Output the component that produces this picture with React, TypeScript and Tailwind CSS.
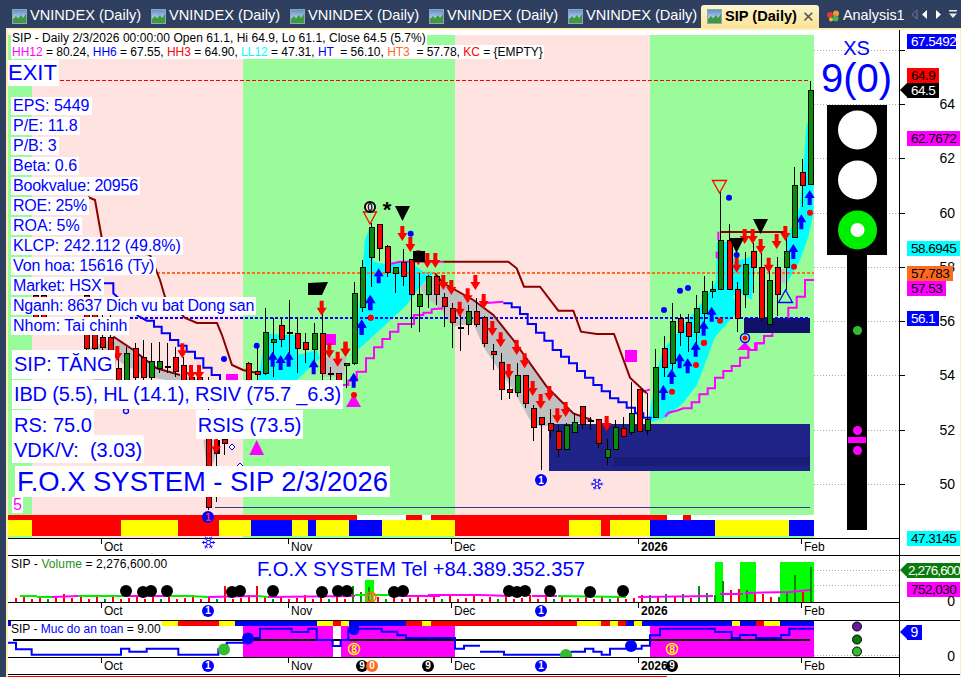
import { Snowflake } from "lucide-react";

type Row = number[];

// chart data is read off the screenshot crops: (ox, oy) is the crop origin, coordinates are 3x
const pts = (ox: number, oy: number, list: Row[]) =>
  list.map(([x, y]) => `${ox + x / 3},${oy + y / 3}`).join(" ");
const conv = (ox: number, oy: number, list: Row[]) =>
  list.map(([x, y]) => [ox + x / 3, oy + y / 3]);
const candles = (ox: number, oy: number, list: Row[]) =>
  list.map(([x, wt, bt, bb, wb, c]) => ({
    x: Math.round(ox + x / 3),
    wt: Math.round(oy + wt / 3),
    bt: Math.round(oy + bt / 3),
    bb: Math.round(oy + bb / 3),
    wb: Math.round(oy + wb / 3),
    c,
  }));

const allCandles = [
  ...candles(0, 280, [
    [106, 30, 45, 110, 130, 0],
    [130, 30, 45, 110, 130, 0],
    [258, 40, 45, 205, 230, 0],
    [282, 60, 100, 205, 240, 0],
    [306, 100, 170, 200, 240, 0],
    [330, 100, 170, 210, 250, 0],
    [354, 200, 265, 310, 330, 0],
    [378, 200, 218, 310, 340, 1],
    [404, 190, 203, 290, 300, 0],
    [428, 180, 232, 290, 310, 0],
    [452, 190, 242, 290, 300, 1],
    [476, 187, 242, 265, 280, 1],
    [500, 190, 258, 262, 280, 2],
    [524, 200, 232, 274, 290, 0],
    [548, 230, 256, 300, 320, 0],
    [572, 270, 290, 330, 340, 0],
    [596, 270, 290, 340, 350, 0],
    [624, 290, 470, 682, 690, 0],
    [648, 470, 480, 520, 665, 2],
    [672, 475, 478, 490, 525, 0],
    [744, 245, 250, 300, 330, 0],
    [770, 200, 274, 282, 320, 0],
    [795, 85, 155, 280, 285, 1],
    [819, 115, 178, 185, 290, 1],
    [843, 115, 135, 178, 200, 0],
    [867, 60, 155, 160, 250, 0],
    [891, 110, 160, 203, 280, 0],
    [915, 160, 185, 208, 250, 0],
    [941, 130, 160, 208, 280, 1],
    [965, 100, 160, 280, 300, 0],
    [989, 260, 278, 280, 300, 2],
    [1013, 280, 280, 300, 330, 0],
  ]),
  ...candles(340, 190, [
    [17, 520, 520, 526, 595, 1],
    [41, 275, 310, 520, 525, 1],
    [65, 210, 232, 352, 365, 1],
    [92, 100, 112, 200, 292, 1],
    [117, 103, 103, 175, 212, 0],
    [141, 165, 167, 247, 262, 0],
    [165, 232, 232, 248, 310, 1],
    [189, 178, 215, 257, 287, 0],
    [213, 208, 208, 313, 415, 0],
    [237, 250, 313, 347, 425, 1],
    [263, 255, 257, 313, 355, 1],
    [287, 255, 257, 313, 345, 0],
    [311, 310, 322, 347, 410, 0],
    [335, 340, 355, 395, 473, 0],
    [359, 375, 410, 412, 482, 2],
    [383, 345, 362, 403, 435, 1],
    [407, 325, 362, 403, 410, 0],
    [431, 378, 380, 460, 472, 0],
    [458, 462, 484, 493, 540, 0],
    [483, 490, 517, 598, 630, 0],
    [507, 560, 598, 607, 628, 0],
    [531, 520, 556, 607, 622, 1],
    [555, 555, 556, 640, 655, 0],
    [579, 645, 655, 712, 752, 0],
    [603, 680, 680, 703, 840, 0],
    [629, 657, 698, 721, 745, 0],
    [654, 705, 722, 778, 800, 0],
    [678, 700, 704, 778, 780, 1],
    [702, 668, 697, 727, 730, 1],
    [726, 647, 647, 703, 718, 0],
    [750, 680, 690, 692, 720, 2],
    [774, 688, 688, 760, 775, 0],
    [800, 748, 778, 802, 825, 1],
    [824, 690, 712, 778, 780, 1],
    [848, 682, 713, 737, 738, 0],
    [873, 577, 670, 727, 735, 1],
    [897, 598, 598, 722, 722, 0],
    [921, 608, 688, 721, 735, 1],
    [945, 478, 532, 680, 680, 1],
  ]),
  ...candles(640, 80, [
    [72, 768, 805, 861, 891, 0],
    [95, 670, 723, 849, 870, 1],
    [120, 703, 715, 757, 798, 0],
    [143, 703, 725, 767, 815, 0],
    [168, 645, 685, 757, 815, 1],
    [192, 588, 634, 700, 750, 1],
    [215, 603, 628, 634, 655, 1],
    [240, 335, 481, 628, 630, 1],
    [266, 433, 481, 628, 630, 0],
    [290, 605, 628, 715, 755, 0],
    [315, 517, 553, 643, 683, 1],
    [339, 490, 514, 562, 640, 0],
    [363, 520, 562, 715, 722, 0],
    [387, 560, 601, 733, 735, 1],
    [411, 530, 562, 643, 707, 0],
    [437, 460, 514, 562, 630, 1],
    [461, 262, 316, 472, 472, 1],
    [486, 237, 277, 316, 380, 0],
    [510, 3, 31, 311, 311, 1],
  ]),
];

const redArrows = [
  ...conv(340, 190, [[16, 455], [187, 108], [211, 141], [235, 181], [262, 189], [286, 189], [310, 255], [334, 270], [383, 295], [406, 255], [431, 312], [359, 335], [457, 393], [482, 427], [530, 450], [554, 490], [506, 522], [578, 573], [628, 588], [602, 612], [652, 655], [677, 636], [800, 678]]),
  ...conv(0, 280, [[352, 198], [547, 190], [573, 255], [597, 255], [965, 62], [988, 190], [1013, 215], [1037, 185], [648, 478]]),
  ...conv(640, 80, [[290, 533], [314, 447], [338, 447], [362, 477], [386, 533], [410, 462], [436, 438]]),
];
const blueArrows = [
  ...conv(340, 190, [[41, 548], [65, 388], [92, 316], [116, 235]]),
  ...conv(0, 280, [[818, 215], [842, 225], [866, 215], [941, 238], [1085, 120], [1110, 45]]),
  ...conv(640, 80, [[191, 722], [215, 680], [460, 492], [484, 403], [509, 330]]),
  ...conv(640, 340, [[70, 135], [95, 87], [119, 40], [143, 55], [167, 5]]),
];
const blueDots = [
  ...conv(340, 190, [[212, 131]]),
  ...conv(0, 280, [[770, 197], [672, 237]]),
  ...conv(640, 80, [[72, 690], [120, 632], [144, 624], [267, 353], [290, 525]]),
];
const redDots = [
  ...conv(340, 190, [[92, 383]]),
  ...conv(0, 280, [[1112, 113], [1062, 345]]),
  ...conv(640, 80, [[240, 722], [192, 789], [462, 560], [510, 398]]),
  ...conv(640, 340, [[96, 155], [168, 75], [192, 8]]),
];

const arrowDown = (x: number, y: number) => `M${x - 2} ${y}h4v7h3l-5 8l-5-8h3z`;
const arrowUp = (x: number, y: number) => `M${x - 2} ${y + 15}h4v-7h3l-5-8l-5 8h3z`;

const bands = [
  [8, 32, "#99fb99"],
  [32, 243, "#ffe3e0"],
  [243, 455, "#99fb99"],
  [455, 650, "#ffe3e0"],
  [650, 814, "#99fb99"],
] as const;

const stripTop = [[8, 357], [406, 422], [431, 667], [683, 691]];
const stripMain = [
  [8, 32, "#ffff00"], [32, 121, "#ff0000"], [121, 178, "#ffff00"], [178, 219, "#ff0000"],
  [219, 251, "#ffff00"], [251, 292, "#0000ff"], [292, 308, "#ffff00"], [308, 316, "#0000ff"],
  [316, 349, "#ffff00"], [349, 382, "#0000ff"], [382, 455, "#ffff00"], [455, 569, "#ff0000"],
  [569, 601, "#ffff00"], [601, 610, "#ff0000"], [610, 650, "#ffff00"], [650, 715, "#0000ff"],
  [715, 789, "#ffff00"], [789, 814, "#0000ff"],
] as const;
const stripSafety = [
  [161, 178, "#ffff00"], [178, 219, "#ff0000"], [219, 235, "#ffff00"], [235, 317, "#0000ff"],
  [317, 333, "#ffff00"], [333, 341, "#ff0000"], [341, 349, "#ffff00"], [349, 406, "#0000ff"],
  [406, 422, "#ff0000"], [422, 431, "#ffff00"], [431, 577, "#ff0000"], [577, 601, "#ffff00"],
  [601, 610, "#ff0000"], [610, 618, "#ffff00"], [618, 626, "#ff0000"], [626, 634, "#0000ff"],
  [634, 642, "#ffff00"], [642, 732, "#0000ff"], [732, 740, "#ffff00"], [740, 756, "#0000ff"],
  [756, 764, "#ff0000"], [764, 780, "#ffff00"], [780, 814, "#0000ff"],
] as const;

const priceTicks = [50, 104, 158, 213, 267, 321, 375, 430, 484];

function MainChart() {
  return (
    <svg className="block h-[508px] w-[891px]" viewBox="8 30 891 508">
      {bands.map(([a, b, c]) => (
        <rect key={a} x={a} y={35} width={b - a} height={503} fill={c} />
      ))}
      {priceTicks.map((y) => (
        <line key={y} x1={814} x2={899} y1={y + 0.5} y2={y + 0.5} stroke="#aaaaaa" strokeDasharray="1 2" />
      ))}
      <rect x={8} y={515} width={806} height={21} fill="#ffffff" />
      {stripTop.map(([a, b]) => (
        <rect key={a} x={a} y={515} width={b - a} height={5} fill="#ff0000" />
      ))}
      {stripMain.map(([a, b, c]) => (
        <rect key={a} x={a} y={520} width={b - a} height={16} fill={c} />
      ))}

      {/* clouds */}
      <g fill="#00ffff">
        <polygon points={pts(0, 280, [[775, 300], [790, 200], [800, 160], [850, 165], [885, 165], [895, 225], [950, 210], [960, 235], [890, 300]])} />
        <polygon points={pts(340, 190, [[30, 500], [45, 470], [60, 320], [75, 150], [88, 115], [100, 215], [150, 225], [185, 215], [215, 220], [250, 245], [285, 245], [240, 290], [200, 345], [130, 410], [70, 465], [40, 490]])} />
        <polygon points="648,423 655,380 663,350 680,330 700,305 716,282 717,242 727,242 735,262 755,255 752,300 740,293 733,296 740,310 730,320 715,337 697,385 683,403 667,417" />
        <polygon points={pts(640, 80, [[440, 610], [438, 490], [462, 420], [480, 380], [495, 200], [500, 130], [520, 130], [520, 400], [505, 470], [480, 540]])} />
      </g>
      <g fill="#c0c0c0">
        <polygon points={pts(340, 190, [[240, 290], [290, 250], [310, 280], [400, 330], [460, 375], [520, 450], [620, 590], [700, 670], [755, 695], [600, 710], [570, 690], [520, 600], [470, 530], [430, 470], [400, 400], [340, 410], [310, 370], [250, 310]])} />
        <polygon points={pts(0, 280, [[255, 210], [340, 175], [400, 210], [470, 265], [560, 290], [600, 300], [500, 300], [440, 290], [350, 240], [340, 300], [280, 300]])} />
        <polygon points={pts(0, 280, [[970, 230], [1040, 230], [1030, 290], [970, 290]])} />
        <polygon points={pts(0, 280, [[610, 480], [660, 480], [640, 550], [620, 560]])} />
        <polygon points={pts(640, 80, [[420, 570], [436, 565], [436, 610], [420, 610]])} />
      </g>

      <rect x={549} y={424} width={261} height={47} fill="#1f2388" />
      <rect x={614} y={457} width={196} height={9} fill="#1a1d75" />
      <rect x={744} y={318} width={66} height={15} fill="#11116a" />
      <line x1={215} x2={810} y1={507.5} y2={507.5} stroke="#333a8c" />

      <line x1={60} x2={810} y1={80.5} y2={80.5} stroke="#ff0000" strokeDasharray="4 2" />
      <line x1={12} x2={814} y1={273} y2={273} stroke="#ff6a1f" strokeWidth={2} strokeDasharray="3 2" />
      <line x1={125} x2={810} y1={318} y2={318} stroke="#0000ff" strokeWidth={2} strokeDasharray="3 2" />

      {/* step and average lines */}
      <g fill="none" strokeWidth={2}>
        <polyline stroke="#ff00ff" points={pts(340, 190, [[5, 585], [25, 585], [25, 572], [50, 572], [50, 545], [78, 545], [78, 505], [102, 505], [102, 472], [127, 472], [127, 447], [150, 447], [150, 425], [175, 425], [175, 402], [222, 402], [222, 375], [250, 375], [250, 368], [275, 368], [275, 358], [310, 355]])} />
        <polyline stroke="#ff00ff" points={pts(340, 190, [[150, 222], [180, 215], [310, 215]])} />
        <polyline stroke="#ff00ff" points={pts(340, 190, [[430, 340], [490, 335]])} />
        <polyline stroke="#0000ff" points={pts(340, 190, [[490, 340], [515, 340], [515, 352], [540, 352], [540, 372], [563, 372], [563, 402], [588, 402], [588, 428], [613, 428], [613, 452], [638, 452], [638, 480], [663, 480], [663, 500], [687, 500], [687, 520], [711, 520], [711, 543], [735, 543], [735, 563], [760, 563], [760, 585], [785, 585], [785, 604], [810, 604], [810, 625], [835, 625], [835, 637], [860, 637], [860, 653], [885, 653], [885, 670], [910, 670], [910, 683], [935, 683]])} />
        <polyline stroke="#0000ff" points={pts(0, 280, [[310, 10], [340, 10], [340, 40], [415, 108], [440, 122], [462, 122], [462, 140], [485, 140], [485, 160], [510, 160], [510, 180], [535, 180], [535, 197], [560, 197], [560, 215], [585, 215], [585, 235], [610, 235], [610, 263], [635, 263], [635, 285], [660, 285], [660, 300]])} />
        <polyline stroke="#ff00ff" points={pts(640, 340, [[75, 230], [85, 218], [110, 212], [130, 205], [155, 205], [155, 187], [178, 187], [178, 163], [203, 163], [203, 145], [225, 145], [225, 113], [250, 113], [250, 93], [275, 93], [275, 78], [300, 78], [300, 53], [325, 53], [325, 30], [350, 30], [350, 10], [372, 10]])} />
        <polyline stroke="#ff00ff" points={pts(640, 80, [[345, 810], [345, 790], [372, 790], [372, 768], [397, 768], [397, 760]])} />
        <polyline stroke="#ff00ff" points={pts(640, 80, [[445, 715], [445, 683], [470, 683], [470, 650], [495, 650], [495, 600], [522, 600]])} />
        <polyline stroke="#ff00ff" points={pts(640, 80, [[235, 480], [235, 455]])} />
        <polyline stroke="#ff00ff" points={pts(640, 80, [[230, 535], [230, 515]])} />
        <polyline stroke="#ff00ff" points={pts(640, 340, [[10, 155], [30, 148]])} />
        <polyline stroke="#8b0000" points="88,197 95,200 103,245 125,248 150,255 160,280 165,297 185,318 197,323 217,323 222,335 232,365 243,370 257,373" />
        <polyline stroke="#8b0000" points={pts(0, 280, [[340, 170], [400, 210], [470, 265], [540, 285]])} />
        <polyline stroke="#8b0000" points={pts(340, 190, [[310, 215], [505, 215], [530, 235], [552, 290], [600, 290], [655, 362], [700, 362], [723, 425], [770, 432], [822, 432], [870, 563], [920, 610]])} />
        <polyline stroke="#8b0000" points={pts(340, 190, [[285, 250], [310, 280], [400, 330], [460, 375], [520, 450], [620, 590], [700, 670], [755, 690]])} />
        <polyline stroke="#8b0000" points="720,232 787,232" />
        <polyline stroke="#8b0000" points={pts(640, 340, [[0, 150], [15, 155]])} />
      </g>

      <g fill="#ff00ff">
        <rect x={625} y={350} width={12} height={12} />
        <rect x={226} y={374} width={12} height={6} />
        <rect x={325} y={334} width={11} height={11} />
        <polygon points="346,407 361,407 353.7,394" />
        <polygon points="249.3,455 264,455 256.7,440" />
        <polygon points="737,350 752,350 745,342" />
      </g>

      {/* candles */}
      <g shapeRendering="crispEdges">
        {allCandles.map((k) => (
          <g key={k.x}>
            <line x1={k.x + 0.5} x2={k.x + 0.5} y1={k.wt} y2={k.wb} stroke="#000" />
            <rect
              x={k.x - 2}
              y={k.bt + 0.5}
              width={5}
              height={Math.max(k.bb - k.bt, 1)}
              fill={k.c === 0 ? "#ff0000" : k.c === 1 ? "#0a8a0a" : "#000"}
              stroke="#000"
            />
          </g>
        ))}
      </g>

      {redArrows.map(([x, y]) => (
        <path key={`${x}-${y}`} d={arrowDown(x, y)} fill="#ff0000" />
      ))}
      {blueArrows.map(([x, y]) => (
        <path key={`${x}-${y}`} d={arrowUp(x, y)} fill="#0000ff" />
      ))}
      {blueDots.map(([x, y]) => (
        <circle key={`${x}-${y}`} cx={x} cy={y} r={3} fill="#0000ff" />
      ))}
      {redDots.map(([x, y]) => (
        <circle key={`${x}-${y}`} cx={x} cy={y} r={3} fill="#ff0000" />
      ))}

      <g fill="#000">
        <polygon points="395,206 410,206 402.5,221" />
        <polygon points="753,219 768,219 760.5,234" />
        <polygon points="729,238 744,238 736.5,253" />
        <polygon points="308,283 328,282 322,295 308,295" />
        <rect x={413} y={251} width={12} height={11} />
      </g>
      <g fill="none" strokeWidth={1.3}>
        <polygon points="712.5,180.5 726.5,180.5 719.5,193" stroke="#ff0000" />
        <polygon points="363.5,212 376.5,212 370,224" stroke="#ff0000" />
        <polygon points="778.5,302.5 792.5,302.5 785.5,290" stroke="#0000ff" />
        <circle cx={745} cy={338} r={4.5} stroke="#0000ff" strokeWidth={1.5} />
        <circle cx={126} cy={411} r={2.5} stroke="#0000ff" />
      </g>
      <circle cx={745} cy={338} r={2.5} fill="#ff0000" />
      <polygon points="232,444 235,447 232,450 229,447" fill="#fff" stroke="#0000ff" />
      <polygon points="240,463 243,466 240,469 237,466" fill="#fff" stroke="#0000ff" />

      <circle cx={370} cy={207} r={5} fill="#fff" stroke="#000" strokeWidth={2} />
      <text x={370} y={211} textAnchor="middle" fontSize={10} fontWeight={700} fill="#000">0</text>
      <text x={387} y={217} textAnchor="middle" fontSize={22} fontWeight={700} fill="#000">*</text>
      <circle cx={541} cy={480} r={6} fill="#0000ff" />
      <text x={541} y={484} textAnchor="middle" fontSize={10} fontWeight={700} fill="#fff">1</text>
      <circle cx={208} cy={517} r={6} fill="#0000ff" />
      <text x={208} y={521} textAnchor="middle" fontSize={10} fontWeight={700} fill="#ff3030">1</text>

      {/* traffic light */}
      <rect x={827} y={105} width={60} height={150} fill="#000" />
      <rect x={847} y={255} width={20} height={275} fill="#000" />
      <circle cx={857.5} cy={130} r={19.5} fill="#fff" />
      <circle cx={857.5} cy={180} r={19.5} fill="#fff" />
      <circle cx={857.5} cy={230} r={19.5} fill="#00ee00" />
      <circle cx={857.5} cy={230} r={7} fill="#fff" />
      <circle cx={857.5} cy={330.5} r={4.5} fill="#33bb33" />
      <circle cx={857.5} cy={430.5} r={4.5} fill="#ff00ff" />
      <circle cx={857.5} cy={450.5} r={4.5} fill="#ff00ff" />
      <rect x={848} y={437} width={18} height={6} fill="#ff00ff" />
    </svg>
  );
}

const volumeOverrides: Record<number, number> = {
  26: -16, 30: -16, 42: 16, 43: 10, 44: 15, 85: 16, 86: 9, 87: 7, 88: 21, 89: -12, 90: -13,
  91: 12, 92: -8, 93: -8, 95: 5, 96: 10, 97: 27, 98: -10, 99: 35, 6: -8, 79: 7, 81: 8, 83: 8,
};
const volumePattern = [-4, -7, -3, -5, 3, -6, -3];
const volumes = Array.from({ length: 100 }, (_, i) => volumeOverrides[i] ?? volumePattern[i % 7]);

const volumeDots = [126, 143, 151, 167, 232, 240, 273, 322, 338, 347, 394, 403, 509, 517, 525, 550, 590, 623];

function VolumeChart() {
  return (
    <svg className="block h-[46px] w-[891px]" viewBox="8 556 891 46">
      <g fill="#00ff00">
        <rect x={365} y={580} width={9} height={22} />
        <rect x={715} y={562} width={8} height={40} />
        <rect x={740} y={562} width={16} height={40} />
        <rect x={780} y={562} width={34} height={40} />
      </g>
      <line x1={814} x2={899} y1={570.5} y2={570.5} stroke="#aaaaaa" strokeDasharray="1 2" />
      <line x1={814} x2={899} y1={585.5} y2={585.5} stroke="#aaaaaa" strokeDasharray="1 2" />
      <g shapeRendering="crispEdges">
        {volumes.map((v, i) => (
          <rect
            key={i}
            x={Math.round(15.3 + 8.027 * i)}
            y={602 - Math.abs(v)}
            width={1.5}
            height={Math.abs(v)}
            fill={v < 0 ? "#ff0000" : "#0a8a0a"}
          />
        ))}
      </g>
      <g fill="none" strokeWidth={2}>
        <polyline stroke="#00ee00" points="20,596 37,596" />
        <polyline stroke="#00ee00" points="37,597 52,597" />
        <polyline stroke="#ff00ff" points="52,597 78,596" />
        <polyline stroke="#00ee00" points="78,596 125,596" />
        <polyline stroke="#ff00ff" points="125,596 166,596" />
        <polyline stroke="#00ee00" points="166,596 190,596 208,597" />
        <polyline stroke="#ff00ff" points="208,597 258,596" />
        <polyline stroke="#00ee00" points="258,596 268,597" />
        <polyline stroke="#ff00ff" points="268,597 355,596" />
        <polyline stroke="#00ee00" points="355,595 390,595" />
        <polyline stroke="#ff00ff" points="390,596 440,596" />
        <polyline stroke="#ff00ff" points="428,595 480,595 510,596" />
        <polyline stroke="#ff00ff" points="532,596 557,596" />
        <polyline stroke="#00ee00" points="558,596 626,597" />
        <polyline stroke="#ff00ff" points="638,597 713,596" />
        <polyline stroke="#ff00ff" points="720,594 743,594" />
        <polyline stroke="#ff00ff" points="745,593 790,592 810,590" />
      </g>
      {volumeDots.map((x, i) => (
        <circle key={x} cx={x} cy={i % 3 === 1 ? 592 : 591} r={6} fill="#000" />
      ))}
      <circle cx={371} cy={597} r={5} fill="none" stroke="#ff6a1f" strokeWidth={1.5} />
      <text x={371} y={601} textAnchor="middle" fontSize={10} fontWeight={700} fill="#ff6a1f">0</text>
    </svg>
  );
}

function SafetyChart() {
  return (
    <svg className="block h-[36px] w-[891px]" viewBox="8 621 891 36">
      <rect x={8} y={621} width={3} height={5} fill="#0000ff" />
      {stripSafety.map(([a, b, c]) => (
        <rect key={a} x={a} y={621} width={b - a} height={5} fill={c} />
      ))}
      <g fill="#ff00ff">
        <rect x={243} y={626} width={90} height={31} />
        <rect x={341} y={626} width={114} height={31} />
        <rect x={650} y={626} width={164} height={31} />
      </g>
      <line x1={814} x2={899} y1={655.5} y2={655.5} stroke="#aaaaaa" strokeDasharray="1 2" />
      <line x1={13} x2={810} y1={640} y2={640} stroke="#000" strokeWidth={2} />
      <g fill="none" stroke="#0000ff" strokeWidth={2}>
        <polyline points={pts(0, 510, [[23, 398], [48, 398], [48, 418], [95, 418], [95, 434], [363, 434], [363, 416], [388, 416], [388, 425], [440, 425], [440, 416], [535, 416], [535, 434], [655, 434], [655, 418], [680, 418], [680, 398], [740, 398], [760, 384], [780, 384], [780, 356], [875, 356], [875, 366], [925, 366], [925, 356], [950, 356], [950, 390], [998, 390], [998, 408], [1022, 408], [1022, 390], [1045, 390], [1045, 356], [1145, 356], [1145, 365], [1192, 365], [1192, 376], [1218, 376], [1218, 384], [1365, 384], [1365, 416], [1392, 416], [1392, 407], [1440, 407]])} />
        <polyline points={pts(480, 510, [[0, 425], [72, 425], [72, 434], [240, 434], [275, 425], [315, 425], [315, 416], [340, 416], [340, 425], [365, 425], [365, 434], [390, 434], [390, 416], [438, 416], [485, 416], [485, 407], [510, 407], [510, 376], [540, 376], [540, 356], [705, 356], [705, 366], [755, 366], [755, 384], [780, 384], [780, 375], [828, 375], [828, 384], [903, 384], [903, 375], [928, 375], [928, 356], [1002, 356]])} />
      </g>
      <circle cx={224} cy={649.5} r={6} fill="#33bb33" />
      <circle cx={248} cy={638.5} r={6} fill="#0000ff" />
      <circle cx={354} cy={629.5} r={5.5} fill="#0000ff" />
      <circle cx={566} cy={655} r={6} fill="#33bb33" />
      <circle cx={631} cy={646} r={6} fill="#0000ff" />
      <g fill="none" stroke="#ffff00" strokeWidth={1.5}>
        <circle cx={354} cy={649} r={5.5} />
        <circle cx={672} cy={649} r={5.5} />
      </g>
      <g textAnchor="middle" fontSize={10} fontWeight={700} fill="#ffff00">
        <text x={354} y={653}>8</text>
        <text x={672} y={653}>8</text>
      </g>
      <g stroke="#000">
        <circle cx={857} cy={626.5} r={4.5} fill="#6a1b9a" />
        <circle cx={857} cy={639.5} r={4.5} fill="#0a7a0a" />
        <circle cx={857} cy={651.5} r={4.5} fill="#33bb33" />
      </g>
    </svg>
  );
}

function Badge({ className, children }: { className: string; children: string }) {
  return (
    <span className={`absolute top-[2px] h-[12px] w-[12px] rounded-full text-center text-[10px] font-bold leading-[12px] ${className}`}>
      {children}
    </span>
  );
}

const axisMonths = [
  { label: "Oct", tick: "left-[93px]", text: "left-[96px]", font: "" },
  { label: "Nov", tick: "left-[280px]", text: "left-[283px]", font: "" },
  { label: "Dec", tick: "left-[443px]", text: "left-[446px]", font: "" },
  { label: "2026", tick: "left-[630px]", text: "left-[633px]", font: "font-bold" },
  { label: "Feb", tick: "left-[793px]", text: "left-[796px]", font: "" },
];

function TimeAxis({ height, children }: { height: string; children?: React.ReactNode }) {
  return (
    <div className={`relative w-[891px] border-t border-black bg-white ${height}`}>
      {axisMonths.map((m) => (
        <span key={m.label}>
          <span className={`absolute top-0 h-[5px] w-px bg-black ${m.tick}`} />
          <span className={`absolute top-[1px] text-[12px] leading-[15px] text-black ${m.text} ${m.font}`}>{m.label}</span>
        </span>
      ))}
      {children}
    </div>
  );
}

function ChartIcon() {
  return (
    <svg width="15" height="15" viewBox="0 0 15 15" className="shrink-0">
      <defs>
        <linearGradient id="sky" x1="0" y1="0" x2="0" y2="1">
          <stop offset="0" stopColor="#5f8fc8" />
          <stop offset="1" stopColor="#e8f2fb" />
        </linearGradient>
      </defs>
      <rect x="0.5" y="0.5" width="14" height="14" fill="url(#sky)" stroke="#8fa4bf" />
      <path d="M1 14V10L4 7L6 9.5L9 6L11 9L14 5V14Z" fill="#3f9a3f" />
    </svg>
  );
}

function Tab() {
  return (
    <div className="flex h-[28px] w-[139px] shrink-0 items-center gap-[3px] pl-[6px] pt-[4px] text-white">
      <ChartIcon />
      <span className="text-[14.6px]">VNINDEX (Daily)</span>
    </div>
  );
}

function TabBar() {
  return (
    <div className="relative flex h-[28px] shrink-0 items-start bg-[#2e3f60] pl-[6px]">
      <Tab />
      <Tab />
      <Tab />
      <Tab />
      <Tab />
      <div className="mt-[5px] flex h-[23px] w-[118px] shrink-0 items-center gap-[3px] rounded-t-[3px] bg-gradient-to-b from-[#fdf5cf] to-[#fbe296] pl-[6px] text-black">
        <ChartIcon />
        <span className="text-[14.6px] font-bold">SIP (Daily)</span>
        <span className="ml-auto mr-[4px] text-[15px] leading-none text-[#555]">✕</span>
      </div>
      <div className="flex h-[28px] items-center gap-[3px] pl-[7px] pt-[4px] text-white">
        <svg width="14" height="14" viewBox="0 0 14 14" className="shrink-0">
          <circle cx="4" cy="6" r="3" fill="#e23b3b" />
          <circle cx="10" cy="4.5" r="3" fill="#f59a23" />
          <circle cx="9.5" cy="9.5" r="3" fill="#4caf50" />
          <circle cx="5" cy="10.5" r="2" fill="#d9c23a" />
        </svg>
        <span className="text-[14.4px]">Analysis1</span>
      </div>
      <svg className="absolute right-0 top-[9px]" width="50" height="11" viewBox="0 0 50 11">
        <path d="M6 1L1 5.5L6 10Z" fill="none" stroke="#6b7a94" />
        <path d="M16 1L11 5.5L16 10Z" fill="#ffffff" />
        <path d="M25 1L30 5.5L25 10Z" fill="#ffffff" />
        <path d="M38 1H46V2.5H38ZM38 4.5H46L42 9Z" fill="#e6e9ef" />
      </svg>
    </div>
  );
}

const facts = [
  { text: "EPS: 5449", fit: "" },
  { text: "P/E: 11.8", fit: "" },
  { text: "P/B: 3", fit: "" },
  { text: "Beta: 0.6", fit: "" },
  { text: "Bookvalue: 20956", fit: "tracking-[-0.2px]" },
  { text: "ROE: 25%", fit: "tracking-[-0.2px]" },
  { text: "ROA: 5%", fit: "" },
  { text: "KLCP: 242.112 (49.8%)", fit: "" },
  { text: "Von hoa: 15616 (Ty)", fit: "tracking-[-0.15px]" },
  { text: "Market: HSX", fit: "tracking-[-0.2px]" },
  { text: "Nganh: 8637 Dich vu bat Dong san", fit: "tracking-[-0.25px]" },
  { text: "Nhom: Tai chinh", fit: "" },
];

function BigLabel({ className, children }: { className: string; children: string }) {
  return (
    <div className={`w-fit whitespace-pre bg-white px-[2px] text-[20px] text-[#0000ff] ${className}`}>{children}</div>
  );
}

function PriceTag({ className, children }: { className: string; children: string }) {
  return (
    <div className={`absolute left-[7px] h-[15px] overflow-hidden pl-[4px] text-[13.5px] leading-[15px] tracking-[-0.5px] ${className}`}>{children}</div>
  );
}

function Scale({ className, children }: { className: string; children: string }) {
  return (
    <div className={`absolute right-[5px] text-[14px] leading-[16px] text-black ${className}`}>{children}</div>
  );
}

export default function App() {
  return (
    <div className="flex h-[677px] w-[961px] flex-col overflow-hidden bg-[#2e3f60] [font-family:'Liberation_Sans',Arial,sans-serif]">
      <TabBar />
      <div className="ml-[6px] flex min-h-0 flex-1 flex-col overflow-hidden border-l-2 border-r border-t-2 border-[#fdeeb8] bg-white">
        {/* main pane */}
        <div className="flex h-[525px] shrink-0">
          <div className="relative w-[891px] shrink-0">
            <MainChart />
            <TimeAxis height="h-[17px]">
              <span className="absolute left-[193px] top-[-4px] text-[#0000ff]">
                <Snowflake size={15} strokeWidth={1.5} />
              </span>
            </TimeAxis>
            <span className="absolute left-[582px] top-[447px] text-[#0000ff]">
              <Snowflake size={14} strokeWidth={1.5} />
            </span>

            <div className="absolute left-[3px] top-[1px] text-[12px] leading-[14px] text-black">
              <div className="w-fit bg-white px-[1px] tracking-[0.05px]">SIP - Daily 2/3/2026 00:00:00 Open 61.1, Hi 64.9, Lo 61.1, Close 64.5 (5.7%)</div>
              <div className="w-fit bg-white px-[1px] tracking-[-0.02px]">
                <span className="text-[#ff00ff]">HH12</span> = 80.24, <span className="text-[#0000ff]">HH6</span> = 67.55, <span className="text-[#ff0000]">HH3</span> = 64.90, <span className="text-[#00ffff]">LL12</span> = 47.31, <span className="text-[#0000ff]">HT</span> &nbsp;= 56.10, <span className="text-[#ff6a1f]">HT3</span> &nbsp;= 57.78, <span className="text-[#ff0000]">KC</span> = {"{EMPTY}"}
              </div>
            </div>

            <div className="absolute left-0 top-[30px] bg-white pr-[2px] text-[22px] leading-[26px] text-[#0000ff]">EXIT</div>

            <div className="absolute left-[3px] top-[67px] flex flex-col gap-[2px]">
              {facts.map((f) => (
                <div key={f.text} className={`h-[18px] w-fit bg-white px-[2px] text-[16px] leading-[18px] text-[#0000ff] ${f.fit}`}>{f.text}</div>
              ))}
            </div>

            <div className="absolute left-[4px] top-[320px] flex flex-col">
              <BigLabel className="mb-px h-[29px] leading-[29px]">SIP: TĂNG</BigLabel>
              <BigLabel className="mb-px h-[29px] tracking-[-0.18px] leading-[29px]">IBD (5.5), HL (14.1), RSIV (75.7 _6.3)</BigLabel>
              <div className="flex h-[25px] items-start gap-[102px]">
                <BigLabel className="h-[25px] leading-[30px]">RS: 75.0</BigLabel>
                <BigLabel className="h-[29px] tracking-[-0.1px] leading-[30px]">RSIS (73.5)</BigLabel>
              </div>
              <BigLabel className="h-[28px] leading-[30px]">{"VDK/V:  (3.03)"}</BigLabel>
              <div className="ml-[3px] mt-[3px] h-[31px] w-fit whitespace-pre bg-white px-[2px] text-[27.4px] leading-[32px] text-[#0000ff]">F.O.X SYSTEM - SIP 2/3/2026</div>
              <div className="h-[16px] w-fit bg-white px-px text-[16px] leading-[16px] text-[#ff00ff]">5</div>
            </div>

            <div className="absolute left-[806px] top-[6px] flex w-[85px] flex-col items-center text-[#0000ff]">
              <div className="text-[20px] leading-[24px]">XS</div>
              <div className="text-[40px] leading-[36px]">9(0)</div>
            </div>
          </div>

          <div className="relative flex-1 border-l border-black bg-white">
            {priceTicks.map((y) => (
              <div key={y} className="absolute left-0 h-px w-[5px] bg-black" style={{ top: y - 30 }} />
            ))}
            <Scale className="top-[66px]">64</Scale>
            <Scale className="top-[120px]">62</Scale>
            <Scale className="top-[175px]">60</Scale>
            <Scale className="top-[229px]">58</Scale>
            <Scale className="top-[283px]">56</Scale>
            <Scale className="top-[337px]">54</Scale>
            <Scale className="top-[392px]">52</Scale>
            <Scale className="top-[446px]">50</Scale>
            <PriceTag className="top-[4px] w-[49px] bg-[#0000ff] text-white">67.5492</PriceTag>
            <PriceTag className="top-[38px] w-[32px] bg-[#ff0000] text-black">64.9</PriceTag>
            <div className="absolute left-0 top-[53px] h-0 w-0 border-y-[7.5px] border-r-[7px] border-y-transparent border-r-black" />
            <PriceTag className="top-[53px] w-[32px] bg-black text-white">64.5</PriceTag>
            <PriceTag className="top-[101px] w-[53px] bg-[#ff00ff] text-black">62.7672</PriceTag>
            <PriceTag className="top-[211px] w-[53px] bg-[#00ffff] text-black">58.6945</PriceTag>
            <PriceTag className="top-[236px] w-[46px] bg-[#ff6a1f] text-black">57.783</PriceTag>
            <PriceTag className="top-[251px] w-[39px] bg-[#ff00ff] text-black">57.53</PriceTag>
            <PriceTag className="top-[281px] w-[32px] bg-[#0000ff] text-white">56.1</PriceTag>
            <PriceTag className="top-[501px] w-[53px] bg-[#00ffff] text-black">47.3145</PriceTag>
          </div>
        </div>

        {/* volume pane */}
        <div className="flex h-[65px] shrink-0 border-t border-black">
          <div className="relative w-[891px] shrink-0">
            <VolumeChart />
            <TimeAxis height="h-[18px]">
              <Badge className="left-[194px] bg-[#0000ff] text-white">1</Badge>
              <Badge className="left-[527px] bg-[#0000ff] text-white">1</Badge>
            </TimeAxis>
            <div className="absolute left-[3px] top-[1px] text-[12px] leading-[15px] tracking-[0.1px] text-black">
              SIP - <span className="text-[#1f8f1f]">Volume</span> = 2,276,600.00
            </div>
            <div className="absolute left-[249px] top-[1px] whitespace-pre text-[20.2px] leading-[24px] text-[#0000ff]">F.O.X SYSTEM Tel +84.389.352.357</div>
          </div>
          <div className="relative flex-1 border-l border-black bg-white">
            <div className="absolute left-0 top-[7px] h-0 w-0 border-y-[7.5px] border-r-[7px] border-y-transparent border-r-[#0a7a0a]" />
            <div className="absolute left-[7px] top-[7px] h-[15px] w-[53px] overflow-hidden bg-[#0a7a0a] pl-[1px] text-[13.5px] leading-[15px] tracking-[-0.9px] text-white">2,276,600</div>
            <PriceTag className="top-[26px] w-[53px] bg-[#ff00ff] text-black">752,030</PriceTag>
            <Scale className="top-[37px]">0</Scale>
          </div>
        </div>

        {/* safety pane */}
        <div className="flex h-[54px] shrink-0 border-t border-black">
          <div className="relative w-[891px] shrink-0">
            <SafetyChart />
            <TimeAxis height="h-[17px]">
              <Badge className="left-[194px] bg-[#0000ff] text-white">1</Badge>
              <Badge className="left-[348px] bg-black text-white">9</Badge>
              <Badge className="left-[358px] bg-[#ff6a1f] text-white">0</Badge>
              <Badge className="left-[414px] bg-black text-white">9</Badge>
              <Badge className="left-[527px] bg-[#0000ff] text-white">1</Badge>
              <Badge className="left-[658px] bg-black text-white">9</Badge>
            </TimeAxis>
            <div className="absolute left-[3px] top-[1px] bg-white pr-[1px] text-[12px] leading-[15px] text-black">
              SIP - <span className="text-[#0000ff]">Muc do an toan</span> = 9.00
            </div>
          </div>
          <div className="relative flex-1 border-l border-black bg-white">
            <div className="absolute left-0 top-[4px] h-0 w-0 border-y-[7.5px] border-r-[7px] border-y-transparent border-r-[#0000ff]" />
            <div className="absolute left-[7px] top-[4px] h-[15px] w-[15px] bg-[#0000ff] text-center text-[14px] leading-[15px] text-white">9</div>
            <Scale className="top-[27px]">0</Scale>
          </div>
        </div>

        <div className="flex flex-1 border-t border-black">
          <div className="w-[891px] pt-px">
            <div className="h-px w-[659px] bg-[#ff0000]" />
          </div>
          <div className="flex-1 border-l border-black" />
        </div>
      </div>
    </div>
  );
}
